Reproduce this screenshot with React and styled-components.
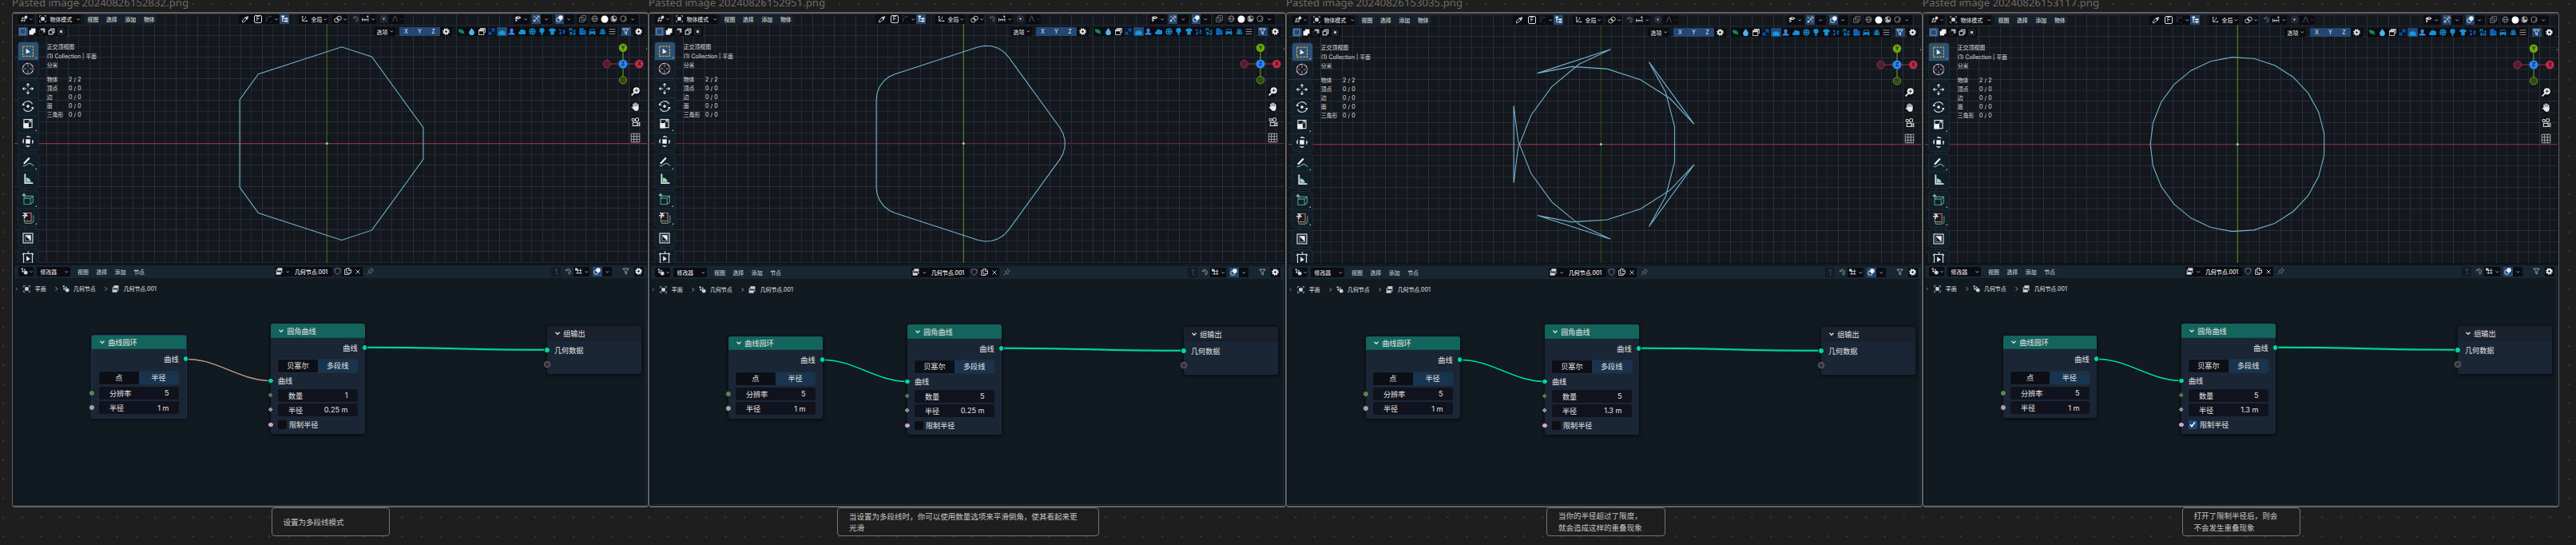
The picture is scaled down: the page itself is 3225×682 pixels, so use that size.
import React from "react";
import styled, { createGlobalStyle } from "styled-components";

const GlobalStyle = createGlobalStyle`
  * { box-sizing: border-box; }
  body { margin: 0; background: #1e1e1e; }
`;

/* ---------- icons ---------- */

const S = { fill: "none", stroke: "currentColor", strokeWidth: 1.5 };
const F = { fill: "currentColor" };

const icons = {
  chevron: <path d="M4 6l4 4 4-4" {...S} strokeWidth={2} />,
  right: <path d="M6 3l5 5-5 5" {...S} strokeWidth={1.8} />,
  left: <path d="M10 3L5 8l5 5" {...S} strokeWidth={1.8} />,
  view3d: (
    <g {...S}>
      <path d="M1 7h10M0 12h10M5 4L2 15M10 8l-3 7" />
      <circle cx="11.5" cy="4.5" r="3.4" {...F} stroke="none" />
    </g>
  ),
  object: (
    <g>
      <rect x="4" y="4" width="8" height="8" {...F} />
      <path d="M1 4.500V1h3.500M11.500 1H15v3.500M15 11.500V15h-3.500M4.500 15H1v-3.500" {...S} strokeWidth={1.2} />
    </g>
  ),
  dropper: (
    <g>
      <path d="M2 14l1-4 5-5 3 3-5 5z" {...S} />
      <path d="M7 4l5 5 1.500-1.500-1-1 2.500-3-2-2-3 2.500-1-1z" {...F} />
    </g>
  ),
  corner: (
    <g {...S}>
      <path d="M3 14v-3a8 8 0 0 1 8-8h3" />
      <path d="M1 1h6M1 1v6M15 15H9" opacity=".4" />
    </g>
  ),
  tree: (
    <g {...F}>
      <rect x="1" y="1" width="6" height="4" />
      <rect x="8" y="6" width="7" height="3.500" />
      <rect x="8" y="11.500" width="7" height="3.500" />
      <path d="M3 5v8.500h5M3 8h5" {...S} />
    </g>
  ),
  axes: <path d="M3 13V2M1 4l2-2 2 2M3 13h11M12 11l2 2-2 2M3 13l7-7M10 3v3.500" {...S} />,
  link: (
    <g {...S}>
      <ellipse cx="10.500" cy="6" rx="4.500" ry="4" />
      <ellipse cx="5.500" cy="10" rx="4.500" ry="4" />
      <circle cx="8" cy="8" r=".8" {...F} />
    </g>
  ),
  magnet: <path d="M2 6a6 6 0 1 1 8 8l-2-3a3 3 0 1 0-3.500-4zM10 14l2-1M2 6l3 1" {...S} strokeWidth={1.6} />,
  snap: (
    <g {...S}>
      <path d="M1 6v8M1 10h13M5 8v5M9 8v5M14 6v8" />
      <circle cx="13" cy="3" r="2" {...F} stroke="none" />
    </g>
  ),
  prop: (
    <g>
      <circle cx="8" cy="8" r="6.500" {...S} strokeWidth={1} opacity=".6" />
      <circle cx="8" cy="8" r="2.500" {...F} />
    </g>
  ),
  falloff: <path d="M1 14C6 13 5 2 8 2s2 11 7 12" {...S} />,
  eyeCursor: (
    <g>
      <path d="M1 6c3-5 10-5 14-1-3 5-10 5-14 1z" {...F} />
      <circle cx="9" cy="5" r="1.500" fill="#111" />
      <path d="M2 8l1 7 4-4z" {...F} />
    </g>
  ),
  gizmo: (
    <g {...S}>
      <path d="M2 3c5 1 9 5 11 11M3 13L13 3M9 2h5v5" />
      <path d="M2 14l1-4 3 3z" {...F} />
    </g>
  ),
  overlay: (
    <g>
      <circle cx="10.500" cy="5.500" r="5" {...F} />
      <circle cx="6" cy="10" r="4.800" {...S} />
    </g>
  ),
  xray: <path d="M5 1h10v10H5zM1 5h10v10H1z" {...S} strokeWidth={1.3} />,
  wire: (
    <g {...S} strokeWidth={1.100}>
      <circle cx="8" cy="8" r="6.500" />
      <ellipse cx="8" cy="8" rx="3" ry="6.500" />
      <path d="M1.500 8h13" />
    </g>
  ),
  solid: <circle cx="8" cy="8" r="7.200" {...F} />,
  material: (
    <g>
      <circle cx="8" cy="8" r="6.500" {...S} />
      <path d="M8 1.500v6.500H14a6.500 6.500 0 0 1-10 5V3a6.500 6.500 0 0 1 4-1.500z" {...F} />
    </g>
  ),
  rendered: (
    <g {...S}>
      <circle cx="8" cy="8" r="6.500" />
      <path d="M12 5a5 5 0 0 1-4 7" />
    </g>
  ),
  gear: (
    <g>
      <circle cx="8" cy="8" r="4" fill="none" stroke="currentColor" strokeWidth="3.400" />
      <circle cx="8" cy="8" r="6.300" fill="none" stroke="currentColor" strokeWidth="3" strokeDasharray="2.470 2.470" />
    </g>
  ),
  selNew: <rect x="1.500" y="1.500" width="13" height="13" {...S} strokeDasharray="2 1.500" />,
  selAdd: <path d="M5 1h10v10h-4v4H1V5h4z" {...F} />,
  selSub: (
    <g>
      <path d="M5 1h10v9h-4V5H5z" {...F} />
      <path d="M1.500 5.500h8v9h-8z" {...S} strokeDasharray="1.500 2" opacity=".6" />
    </g>
  ),
  selXor: <path d="M5.500 2H14v8.500h-3.500M10.500 5.500H2V14h8.500zM5.500 2v3.500" {...S} strokeWidth={2.2} />,
  selAnd: (
    <g>
      <rect x="5" y="5" width="6" height="6" {...F} />
      <rect x="1.500" y="1.500" width="13" height="13" {...S} strokeDasharray="2 2" opacity=".6" />
    </g>
  ),
  leaf: <path d="M1 3c7-1 13 2 13 6l1 5-4-2C5 12 2 9 1 3z" {...F} />,
  drop: <path d="M8 0c3 5 6 7 6 10.500a6 5.500 0 0 1-12 0C2 7 5 5 8 0z" {...F} />,
  windows: (
    <g>
      <path d="M4 4V1h11v9h-3" {...S} />
      <rect x="1" y="4" width="11" height="11" {...S} />
      <rect x="1" y="4" width="11" height="3.500" {...F} />
      <path d="M4 1h11v2H4z" {...F} />
    </g>
  ),
  checker: (
    <g>
      <rect x="1" y="1" width="14" height="14" fill="#04101f" stroke="currentColor" />
      <path d="M8 1h7v7H8zM1 8h7v7H1z" {...F} />
    </g>
  ),
  dome: <path d="M1 15v-4a7 5 0 0 1 14 0v4zM3 2v2M8 1v2M13 2v2" fill="currentColor" stroke="currentColor" />,
  person: <path d="M8 1a4 4 0 0 1 3 6.500l-1 2.500 5 2v3H1v-3l5-2-1-2.500A4 4 0 0 1 8 1z" {...F} />,
  cloud: <path d="M3 14a3 3 0 0 1 0-6 5 5 0 0 1 9-3 4.500 4.500 0 0 1 1 9z" {...F} />,
  reel: (
    <g>
      <circle cx="8" cy="8" r="6.200" fill="none" stroke="currentColor" strokeWidth="2.200" />
      <path d="M8 2v12M2 8h12M4 4l8 8M12 4l-8 8" {...S} strokeWidth={1.6} />
    </g>
  ),
  bulb: <path d="M8 0a5.500 5.500 0 0 1 5.500 6c0 3-3 4-3.500 6H6c-.5-2-3.500-3-3.500-6A5.500 5.500 0 0 1 8 0zM6 13h4v3H6z" {...F} />,
  shirt: <path d="M5 1h6l5 3-2 4-2-1v8H4V7L2 8 0 4z" {...F} />,
  nodesX: <path d="M2 3l4 4M10 9l4 4M2 13h3V9M12 3v4h3" {...S} strokeWidth={3} />,
  cycle: <path d="M2 7V2h5v4M14 3v4H9M2 10h4v4H2M10 10v4h4V9" {...S} strokeWidth={1.8} />,
  building: (
    <g>
      <path d="M1 15V1h9v14zM11 5h4v10h-4z" {...F} />
      <path d="M3 4h5M3 7h5M3 10h5M12 8h2M12 11h2" stroke="#03101e" />
    </g>
  ),
  car: (
    <g>
      <path d="M3 2h10l2 6v7h-3v-2H4v2H1V8z" {...F} />
      <path d="M4 4h8l1 3H3zM3 9.500h2M11 9.500h2" fill="#03101e" stroke="#03101e" />
    </g>
  ),
  road: (
    <g>
      <path d="M4 2h8l3 12H1z" {...F} />
      <path d="M6 3L4 14M10 3l2 11" stroke="#03101e" />
    </g>
  ),
  lines: <path d="M1 3h14M1 8h14M1 13h14" {...S} />,
  filter: <path d="M1.500 2h13l-5 6v6l-3-2V8z" {...S} strokeWidth={1.7} />,
  nodetree: (
    <g {...F}>
      <circle cx="11" cy="11" r="4.300" />
      <circle cx="4" cy="8" r="2" />
      <path d="M1 1h4v3H1zM7 3h3v3H7z" />
      <path d="M3 3l5 8" {...S} strokeWidth={1} />
    </g>
  ),
  group: (
    <g {...F}>
      <rect x="4" y="0.500" width="11" height="6" rx="1" />
      <rect x="1" y="9.500" width="11" height="6" rx="1" />
      <path d="M14 7v5M2 4v5" {...S} strokeWidth={1.8} />
    </g>
  ),
  shield: <path d="M2 3l6-2 6 2v5c0 3-3 5-6 7-3-2-6-4-6-7z" {...S} />,
  copy: <path d="M5 1h6l4 4v7H5zM10 1v5h5M5 4H1v11h10v-3" {...S} strokeWidth={1.7} />,
  close: <path d="M3 3l10 10M13 3L3 13" {...S} strokeWidth={1.8} />,
  pin: <path d="M10 1l5 5-2 .5-2.500 3.500-.5 3-6-6 3-.5L9.500 3zM6 10l-5 5" {...S} />,
  up: <path d="M8 13V2M4 6l4-4 4 4M8 14h5" {...S} />,
  gridSnap: (
    <g {...S}>
      <path d="M6 2v12M12 2v12M2 6h13M2 12h13" />
      <rect x="0" y="1" width="5" height="5" {...F} stroke="none" />
    </g>
  ),
};

const Glyph = ({ name, size = 9 }) => (
  <svg width={size} height={size} viewBox="0 0 16 16" style={{ display: "block", flex: "none" }}>
    {icons[name]}
  </svg>
);

/* left toolbar drawings, 24 x 24 */
const W = { fill: "none", stroke: "#d8d8d8", strokeWidth: 1.3 };
const G = { fill: "none", stroke: "#4f9a7c", strokeWidth: 1.2 };
const toolArt = {
  select: (
    <g>
      <rect x="5" y="5.500" width="14" height="13.500" fill="none" stroke="#d9a336" strokeWidth="1.300" strokeDasharray="3 1.300" />
      <path d="M9.500 8.500v7l5.500-2.500z" fill="#f2f2f2" />
    </g>
  ),
  cursor: (
    <g>
      <circle cx="12" cy="12" r="7.300" fill="none" stroke="#e6dede" strokeWidth="1.200" />
      <circle cx="12" cy="12" r="7.300" fill="none" stroke="#a84450" strokeWidth="1.200" strokeDasharray="3.500 3.500" />
      <path d="M12 6v4M12 14v4M6 12h4M14 12h4" stroke="#999" />
    </g>
  ),
  move: (
    <g fill="#e0e0e0">
      <path d="M12 4l2.500 3h-5zM12 20l2.500-3h-5zM4 12l3-2.500v5zM20 12l-3-2.500v5z" />
      <path d="M12 6v4M12 14v4M6 12h4M14 12h4" {...W} strokeWidth={1} />
    </g>
  ),
  rotate: (
    <g>
      <path d="M5.500 10a6.700 6.700 0 0 1 12.500-1M18.500 14a6.700 6.700 0 0 1-12.500 1" {...W} />
      <path d="M4 11h4l-3-3zM20 13h-4l3 3zM12 9.500l2.500 2.500-2.500 2.500L9.500 12z" fill="#e0e0e0" />
    </g>
  ),
  scale: (
    <g>
      <rect x="6.500" y="6" width="11" height="11" {...W} />
      <rect x="6" y="11" width="7" height="7" fill="#eee" />
      <path d="M12 11l4-4M13 7h3v3" {...W} strokeWidth={1} />
    </g>
  ),
  transform: (
    <g>
      <circle cx="12" cy="12" r="6.600" {...W} strokeDasharray="6 4.360" strokeDashoffset="3" />
      <rect x="9" y="9" width="6" height="6" fill="#eee" />
      <path d="M12 4l2 2h-4zM12 20l2-2h-4zM4 12l2-2v4zM20 12l-2-2v4z" fill="#ddd" />
    </g>
  ),
  annotate: (
    <g>
      <path d="M6.500 14L14 6" stroke="#eee" strokeWidth="2.400" />
      <path d="M5 16.500c4 2.500 6-3.500 10-3 2 .3 2 2.500 5 3" {...G} stroke="#63b78f" />
    </g>
  ),
  measure: (
    <g>
      <path d="M8 5v12.500h11" stroke="#e0e0e0" strokeWidth="2" fill="none" />
      <path d="M9.500 16v-6a6.500 6.500 0 0 1 6.500 6z" fill="#8fd9b3" />
    </g>
  ),
  cube: (
    <g>
      <path d="M6.500 10h9v8h-9zM6.500 10l3-3H19v8l-3.500 3M15.500 10L19 7" {...G} />
      <path d="M6.500 3v5M4 5.500h5" stroke="#8fe0b5" strokeWidth="1.300" />
    </g>
  ),
  cut: (
    <g>
      <path d="M7 18l1.500 2H16l3.500-2V9" {...G} />
      <path d="M8 6h8.500v11H7V12" {...W} stroke="#c46a62" />
      <path d="M4.500 9.500h7M6 5.500l5 5M7 13l3-7" {...W} strokeWidth={1.8} />
    </g>
  ),
  shear: (
    <g>
      <rect x="5.500" y="5.500" width="13" height="13" {...W} />
      <path d="M8 8h8v8z" fill="#eee" />
      <path d="M8.500 8v8H16" {...W} opacity=".5" />
    </g>
  ),
  cage: (
    <g>
      <path d="M6 6h12v13H6zM4.500 7L7 5M17 5l2.500 2" {...W} />
      <path d="M10 9v7l5-3z" fill="#eee" />
      <circle cx="12.500" cy="4" r="1.500" fill="#a77bd0" />
    </g>
  ),
};

/* ---------- page ---------- */

const Board = styled.div`
  width: 3225px;
  height: 682px;
  overflow: hidden;
  background: radial-gradient(circle at 4px 4.800px, #3c3c3c 0.7px, transparent 1.500px) 0 0 / 23.810px 23.810px #1e1e1e;
  font-family: Inter, "Noto Sans CJK SC", sans-serif;
  padding-left: 15px;
  display: flex;
`;

const Column = styled.section`
  width: ${(p) => p.$w}px;
  flex: none;
  display: flex;
  flex-direction: column;
`;

const FileTitle = styled.div`
  height: 15px;
  flex: none;
  line-height: 7.500px;
  font-family: "Noto Sans", sans-serif;
  font-size: 13.200px;
  color: #6a6a6a;
  white-space: nowrap;
`;

const Card = styled.div`
  height: 619.500px;
  flex: none;
  border: 2px solid #626262;
  border-width: 2px 1px;
  border-radius: 4px;
  background: #0e141a;
  padding: 0 1px 1px 2px;
  overflow: hidden;
`;

const Viewport = styled.div`
  position: relative;
  height: 313px;
  padding-top: ${(p) => 1 + p.$shift}px;
  background: #14171c;
  overflow: hidden;
  border-bottom: 1px solid #0d1218;
`;

const Scene = styled.svg`
  position: absolute;
  left: 0;
  top: ${(p) => p.$shift}px;
  width: 793px;
  height: 313px;
`;

const Bar = styled.div`
  position: relative;
  display: flex;
  align-items: center;
  height: ${(p) => p.$h || 11.5}px;
  margin-top: ${(p) => p.$mt || 0}px;
  padding-left: ${(p) => p.$pl ?? 5}px;
  font-size: 6.900px;
  font-weight: 500;
  color: #d2d2d2;
`;

const tones = { dark: "#0a0c11", blue: "#234873", menu: "#16212b", dim: "#131a26", none: "transparent" };

const Cell = styled.div`
  flex: none;
  width: ${(p) => p.$w}px;
  height: 11.500px;
  margin-left: ${(p) => p.$ml || 0}px;
  background: ${(p) => tones[p.$t || "dark"]};
  color: ${(p) => p.$c || "inherit"};
  display: flex;
  align-items: center;
  justify-content: center;
  border-radius: ${(p) => p.$r || 0}px;
  white-space: nowrap;
`;

const Button = styled(Cell)`
  justify-content: flex-start;
  padding: 0 2px 0 ${(p) => p.$pad ?? 3}px;
  gap: ${(p) => p.$gap || 0}px;
  border-radius: 2px;
  & > svg:last-child { margin-left: auto; }
`;

const MenuGroup = styled(Cell)`
  justify-content: flex-start;
  padding-left: ${(p) => p.$pad}px;
  gap: 9.700px;
  border-radius: 2px;
`;

const KeyBox = styled.span`
  width: 10.500px;
  height: 10px;
  border: 1px solid #ddd;
  border-radius: 2px;
  font-size: 7.500px;
  line-height: 8.500px;
  text-align: center;
`;

const IconCell = ({ name, size, ...rest }) => (
  <Cell {...rest}>
    <Glyph name={name} size={size} />
  </Cell>
);
const Chev = (p) => <IconCell name="chevron" size={6.5} {...p} />;

const Body = styled.div`
  position: relative;
  display: flex;
  align-items: flex-start;
  margin-top: 7.800px;
  padding-left: 5px;
`;

const Tools = styled.div`
  display: flex;
  flex-direction: column;
  gap: 3.900px;
  width: 24.500px;
`;

const ToolGroup = styled.div`
  flex: none;
  border-radius: 3px;
  background: #121e27;
  box-shadow: 0 0 0 0.800px #1c2f3e;
  overflow: hidden;
`;

const Tool = styled.div`
  position: relative;
  height: 21.800px;
  display: flex;
  align-items: center;
  justify-content: center;
  background: ${(p) => (p.$on ? "#2b5276" : "transparent")};
  & + & { box-shadow: inset 0 0.700px 0 #1c2f3e; }
  &::after {
    content: "";
    display: ${(p) => (p.$more ? "block" : "none")};
    position: absolute;
    right: 1.500px;
    bottom: 1.500px;
    border: 1.200px solid #b5b5b5;
    border-left-color: transparent;
    border-top-color: transparent;
  }
`;

const Info = styled.div`
  margin-left: 11.200px;
  font-size: 6.900px;
  line-height: 11.400px;
  color: #dedede;
  white-space: nowrap;
`;

const Stats = styled.dl`
  display: grid;
  grid-template-columns: 27.200px auto;
  margin: 6.300px 0 0;
  line-height: 11.050px;
  dt, dd { margin: 0; }
  dd { font-size: 7px; letter-spacing: 0.150px; }
`;

const NavColumn = styled.div`
  margin-left: auto;
  width: 56px;
  display: flex;
  flex-direction: column;
  align-items: flex-end;
  padding-right: 8px;
`;

const Gizmo = styled.svg`
  width: 56px;
  height: 56px;
  margin: -1px -6px 0 0;
  overflow: visible;
`;

const NavIcon = styled.svg`
  display: block;
  width: 13px;
  height: 13px;
  margin-bottom: 6.200px;
`;

/* ---------- viewport drawing ---------- */

const CX = 409.3;
const CY = 179.6;
const UNIT = 135;

const filletPentagon = (count, meters, limited) => {
  const half = UNIT * Math.sin(Math.PI / 5);
  const tan54 = Math.tan(0.3 * Math.PI);
  let r = meters * UNIT;
  if (limited) r = Math.min(r, half * tan54);
  const centre = UNIT - r / Math.sin(0.3 * Math.PI);
  const pts = [];
  for (let k = 0; k < 5; k++) {
    const a = (k * 2 * Math.PI) / 5;
    for (let i = 0; i <= count; i++) {
      const t = a - Math.PI / 5 + ((2 * Math.PI) / 5) * (i / count);
      pts.push([
        CX + centre * Math.cos(a) + r * Math.cos(t),
        CY - centre * Math.sin(a) - r * Math.sin(t),
      ]);
    }
  }
  return pts.map((p) => p.map((n) => n.toFixed(2)).join(",")).join(" ");
};

const range = (a, b) => Array.from({ length: b - a + 1 }, (_, i) => a + i);

const SceneDrawing = ({ count, radius, limited, green, red, shift }) => (
  <Scene $shift={shift} viewBox="18 17 793 313">
    {range(-29, 29).map((k) => {
      const x = Math.floor(409 + k * 13.5) + 0.5;
      return <path key={`x${k}`} d={`M${x} 10V330`} stroke={k % 2 ? "#1f2835" : "#262f40"} />;
    })}
    {range(-12, 11).map((k) => {
      const y = Math.floor(179.5 + k * 13.5) + 0.5;
      return <path key={`y${k}`} d={`M18 ${y}H811`} stroke={k % 2 ? "#1f2835" : "#262f40"} />;
    })}
    <path d="M18 179.600H811" stroke={red} strokeWidth="1.300" />
    <path d="M409.300 30V330" stroke={green} strokeWidth="1.300" />
    <polygon points={filletPentagon(count, radius, limited)} fill="none" stroke="#6fb4cd" strokeWidth="1.100" />
    <circle cx="409.300" cy="179.600" r="1.500" fill="#7fd3f0" />
  </Scene>
);

const toolGroups = [
  [["select", 1], ["cursor", 0]],
  [["move", 0], ["rotate", 0], ["scale", 1], ["transform", 0]],
  [["annotate", 1], ["measure", 0]],
  [["cube", 1], ["cut", 1]],
  [["shear", 0]],
  [["cage", 0]],
];

const addonIcons = [
  ["leaf", "#128a4a"], ["drop", "#4cb4f0"], ["windows", "#d8d8d8"], ["checker", "#0d4b96"],
  ["dome", "#159be0"], ["person", "#3d86e8"], ["cloud", "#1492da"], ["reel", "#1492da"],
  ["bulb", "#1492da"], ["shirt", "#1492da"], ["nodesX", "#155fc0"], ["cycle", "#1492da"],
  ["building", "#127fe6"], ["car", "#1492da"], ["road", "#1280c2"], ["lines", "#a8a8a8"],
];

const ViewportEditor = ({ shift, ...scene }) => (
  <Viewport $shift={shift}>
    <SceneDrawing shift={shift} {...scene} />
    <Bar>
      <Button $w={19} $gap={1}><Glyph name="view3d" /><Glyph name="chevron" size={6} /></Button>
      <Button $w={54} $ml={5} $pad={2} $gap={4.5}>
        <Glyph name="object" />物体模式<Glyph name="chevron" size={6.5} />
      </Button>
      <MenuGroup $w={92} $ml={4} $t="menu" $pad={4.5}>
        <span>视图</span><span>选择</span><span>添加</span><span>物体</span>
      </MenuGroup>
      <IconCell name="dropper" $w={16} $ml={102} size={10} />
      <Cell $w={16}><KeyBox>F</KeyBox></Cell>
      <IconCell name="corner" $w={11} $c="#5a5f66" />
      <Chev $w={8} />
      <IconCell name="tree" $w={12} $t="blue" $c="#f2f2f2" />
      <IconCell name="axes" $w={15} $ml={12} />
      <Cell $w={15}>全局</Cell>
      <Chev $w={7} />
      <IconCell name="link" $w={13} $ml={5} size={10} />
      <Chev $w={6} />
      <IconCell name="magnet" $w={11} $ml={5} $t="dim" $c="#66696f" />
      <IconCell name="snap" $w={13} />
      <Chev $w={7} />
      <IconCell name="prop" $w={11} $ml={4} $t="dim" $c="#9aa0aa" />
      <IconCell name="falloff" $w={14} $ml={1} $c="#6a6e74" />
      <Chev $w={5} $c="#44484e" />
      <IconCell name="eyeCursor" $w={11} $ml={137} />
      <Chev $w={9} />
      <IconCell name="gizmo" $w={11} $ml={3} $t="blue" />
      <Chev $w={14} />
      <IconCell name="overlay" $w={11} $ml={4} $t="blue" $c="#f0f0f0" />
      <Chev $w={13} />
      <IconCell name="xray" $w={12} $ml={4} $c="#8d9096" />
      <IconCell name="wire" $w={12} $ml={3.5} $c="#a5a5a5" />
      <IconCell name="solid" $w={12} size={10} $c="#fff" />
      <IconCell name="material" $w={12} $c="#b5b5b5" />
      <IconCell name="rendered" $w={12} $c="#9c9c9c" />
      <Chev $w={12} />
    </Bar>
    <Bar $mt={4.3} $pl={4.5}>
      <IconCell name="selNew" $w={12} $t="blue" $c="#cfd6dd" />
      <IconCell name="selAdd" $w={12} $c="#f0f0f0" />
      <IconCell name="selSub" $w={12} $c="#b8b8b8" />
      <IconCell name="selXor" $w={12} $c="#c4c4c4" />
      <IconCell name="selAnd" $w={12} $c="#b8b8b8" />
      <Button $w={27} $ml={385.5} $pad={3.5}>选项<Glyph name="chevron" size={6.5} /></Button>
      <Cell $w={17} $ml={5} $t="blue">X</Cell>
      <Cell $w={17} $t="blue">Y</Cell>
      <Cell $w={17} $t="blue">Z</Cell>
      <IconCell name="gear" $w={15} $c="#e6e6e6" />
      {addonIcons.map(([name, colour], i) => (
        <IconCell key={name} name={name} $w={12.6} $ml={i ? 0 : 5.7} $c={colour} $t={name === "dome" ? "blue" : "dark"} />
      ))}
      <IconCell name="filter" $w={12} $ml={4.8} $t="blue" $c="#dfe6ef" />
      <IconCell name="gear" $w={13} $ml={3.5} $c="#f0f0f0" />
    </Bar>
    <Body>
      <Tools>
        {toolGroups.map((group, g) => (
          <ToolGroup key={g}>
            {group.map(([name, more]) => (
              <Tool key={name} $on={name === "select"} $more={more}>
                <svg width="22" height="22" viewBox="0 0 24 24">{toolArt[name]}</svg>
              </Tool>
            ))}
          </ToolGroup>
        ))}
      </Tools>
      <Info>
        <div>正交顶视图</div>
        <div>(1) Collection | 平面</div>
        <div>分米</div>
        <Stats>
          <dt>物体</dt><dd>2 / 2</dd>
          <dt>顶点</dt><dd>0 / 0</dd>
          <dt>边</dt><dd>0 / 0</dd>
          <dt>面</dt><dd>0 / 0</dd>
          <dt>三角形</dt><dd>0 / 0</dd>
        </Stats>
      </Info>
      <NavColumn>
        <Gizmo viewBox="-28 -28 56 56">
          <path d="M-15 0H15" stroke="#b02a44" strokeWidth="1.200" />
          <path d="M0-15V15" stroke="#5f9a12" strokeWidth="1.200" />
          <circle cx="-20.300" r="4.700" fill="#4f1f2c" stroke="#a32b42" />
          <circle cy="20.300" r="4.700" fill="#33491a" stroke="#5f9a12" />
          <circle cx="20.300" r="5.300" fill="#c12c45" />
          <circle cy="-20.300" r="5.300" fill="#69a80c" />
          <circle r="5.600" fill="#2a86f5" />
          <g fontSize="6.500" fontWeight="600" textAnchor="middle" fill="#10151c">
            <text y="2.400">Z</text>
            <text x="20.300" y="2.400">X</text>
            <text y="-17.900">Y</text>
          </g>
          <path d="M31-20.500l-2 1.800 2 1.800" fill="none" stroke="#aaa" strokeWidth=".8" />
        </Gizmo>
        <NavIcon viewBox="0 0 16 16">
          <circle cx="8" cy="8" r="8" fill="#0c0e12" />
          <circle cx="9.500" cy="6.500" r="5" fill="#e8e8e8" />
          <path d="M6 10l-4 4" stroke="#e8e8e8" strokeWidth="2.200" />
          <path d="M9.500 4v5M7 6.500h5" stroke="#222" strokeWidth="1.100" />
        </NavIcon>
        <NavIcon viewBox="0 0 16 16">
          <circle cx="8" cy="8" r="8" fill="#0c0e12" />
          <path d="M5 9V4M7.300 8V2.500M9.700 8V2.800M12 9V4.500" stroke="#e8e8e8" strokeWidth="1.700" strokeLinecap="round" />
          <path d="M4 7.500h9V11c0 2-1.500 3.500-4 3.500-2 0-3-1-4-2.500L1.500 9l1.300-.8L5 10z" fill="#e8e8e8" />
        </NavIcon>
        <NavIcon viewBox="0 0 16 16">
          <circle cx="8" cy="8" r="8" fill="#0c0e12" />
          <g fill="none" stroke="#d0d0d0" strokeWidth="1.400">
            <circle cx="4.500" cy="5" r="2" />
            <circle cx="10.500" cy="4.500" r="2.600" />
            <path d="M4 9h7v5H4zM11 11l3.500-2v5L11 12.500" />
          </g>
        </NavIcon>
        <NavIcon viewBox="0 0 16 16">
          <path d="M1.500 1.500h13v13h-13zM5.800 1.500v13M10.200 1.500v13M1.500 5.800h13M1.500 10.200h13" fill="#14171c" stroke="#c4c4c4" />
        </NavIcon>
      </NavColumn>
    </Body>
  </Viewport>
);

/* ---------- node editor ---------- */

const NodeEditor = styled.div`
  height: 301.500px;
  padding-top: ${(p) => p.$shift}px;
  background: #121a21;
  border-bottom: 1px solid #1c2c3c;
  box-shadow: inset -2px 0 0 #16232e;
`;

const NodeBar = styled(Bar)`
  background: #172631;
  height: 16px;
  margin-top: 1.800px;
`;

const MenuText = styled.span`
  flex: none;
  width: 13.800px;
  margin-left: ${(p) => p.$ml ?? 9.6}px;
  color: #b9c0c5;
  white-space: nowrap;
`;

const Canvas = styled.div`
  position: relative;
  height: 282px;
`;

const Crumbs = styled.div`
  display: flex;
  align-items: center;
  height: 27px;
  font-size: 6.900px;
  font-weight: 500;
  color: #cfcfcf;
  white-space: nowrap;
`;

const Crumb = styled.span`
  margin: 0 ${(p) => p.$mr}px 0 ${(p) => p.$ml}px;
`;

const Links = styled.svg`
  position: absolute;
  left: 0;
  top: 0;
  width: 793px;
  height: 282px;
`;

const NodeBox = styled.div`
  position: absolute;
  left: ${(p) => p.$x}px;
  top: ${(p) => p.$y}px;
  width: ${(p) => p.$w || 117.5}px;
  height: ${(p) => p.$h}px;
  border-radius: 3px;
  background: #1a2536;
  box-shadow: 0 1px 4px 1px rgba(4, 8, 12, 0.75)${(p) => (p.$selected ? ", 0 0 0 1px #35579b" : "")};
  font-size: 9.100px;
  color: #e2e2e2;
  white-space: nowrap;
`;

const NodeHead = styled.div`
  height: 17.200px;
  margin-bottom: 3px;
  padding-left: 7.500px;
  display: flex;
  align-items: center;
  gap: 2.700px;
  border-radius: 3px 3px 0 0;
  background: ${(p) => (p.$plain ? "#1b212c" : "#13645c")};
  border-bottom: 1px solid ${(p) => (p.$plain ? "#151c28" : "#125750")};
`;

const NodeRow = styled.div`
  position: relative;
  height: 18.300px;
  margin-top: ${(p) => p.$mt || 0}px;
  padding: 0 9px;
  display: flex;
  align-items: center;
  justify-content: ${(p) => (p.$out ? "flex-end" : "flex-start")};
`;

const Segments = styled.div`
  flex: 1;
  display: grid;
  grid-template-columns: 1fr 1fr;
  height: 16px;
  line-height: 15.500px;
  text-align: center;
  border-radius: 2.500px;
  overflow: hidden;
  box-shadow: 0 0 0 0.500px #2b3238;
`;

const Segment = styled.span`
  background: ${(p) => (p.$on ? "#18344e" : "#0c0f16")};
`;

const Field = styled.div`
  flex: 1;
  height: 16.300px;
  padding: 0 12px 0 13px;
  display: flex;
  align-items: center;
  justify-content: space-between;
  border-radius: 2.500px;
  background: #10131d;
  box-shadow: 0 0 0 0.500px #1f2835;
`;

const Check = styled.span`
  width: 10.500px;
  height: 11px;
  margin-right: 3.500px;
  border-radius: 2px;
  background: ${(p) => (p.$on ? "#204a7d" : "#0e0e10")};
  display: flex;
  align-items: center;
  justify-content: center;
`;

const Socket = styled.i`
  position: absolute;
  top: 50%;
  ${(p) => (p.$right ? "right: -3.700px" : "left: -3.700px")};
  width: 7.400px;
  height: 7.400px;
  margin-top: -3.700px;
  border: 0.600px solid #0b1015;
  border-radius: 50%;
  background: ${(p) => p.$c};
  ${(p) => p.$hollow && "border: 1px solid #777; background: #333;"}
`;

const DiamondSocket = styled(Socket)`
  border-radius: 1px;
  transform: rotate(45deg) scale(0.8);
  &::after {
    content: "";
    position: absolute;
    inset: 2.300px;
    border-radius: 50%;
    background: #14201b;
  }
`;

const GEO = "#00d6a3";

const Head = ({ children, plain }) => (
  <NodeHead $plain={plain}><Glyph name="chevron" size={10} />{children}</NodeHead>
);

const NodeGraph = ({ amount, length, limited, selected, startX }) => {
  const first = selected ? "#ad8f84" : GEO;
  return (
    <>
      <Links viewBox="18 348 793 282">
        <path d="M233 449.300C273 449.300 299 476.300 339 476.300" fill="none" stroke="#0a0f13" strokeWidth="3.200" />
        <path d="M233 449.300C273 449.300 299 476.300 339 476.300" fill="none" stroke={first} strokeWidth="1.700" />
        <path d="M456 434.700C560 434.700 580 437.700 685 437.700" fill="none" stroke="#0a3a33" strokeWidth="3.200" />
        <path d="M456 434.700C560 434.700 580 437.700 685 437.700" fill="none" stroke={GEO} strokeWidth="1.900" />
      </Links>
      <NodeBox $x={startX - 18} $y={71.8} $w={232.5 - startX} $h={103.5} $selected={selected}>
        <Head>曲线圆环</Head>
        <NodeRow $out>曲线<Socket $right $c={GEO} /></NodeRow>
        <NodeRow $mt={5.8}><Segments><Segment>点</Segment><Segment $on>半径</Segment></Segments></NodeRow>
        <NodeRow $mt={0.5}><Socket $c="#548a55" /><Field><span>分辨率</span><span>5</span></Field></NodeRow>
        <NodeRow><Socket $c="#a1a1a1" /><Field><span>半径</span><span>1 m</span></Field></NodeRow>
      </NodeBox>
      <NodeBox $x={321} $y={57.7} $h={138}>
        <Head>圆角曲线</Head>
        <NodeRow $out>曲线<Socket $right $c={GEO} /></NodeRow>
        <NodeRow $mt={4.6}><Segments><Segment>贝塞尔</Segment><Segment $on>多段线</Segment></Segments></NodeRow>
        <NodeRow $mt={0.4}><Socket $c={GEO} />曲线</NodeRow>
        <NodeRow><DiamondSocket $c="#548a55" /><Field><span>数量</span><span>{amount}</span></Field></NodeRow>
        <NodeRow><DiamondSocket $c="#a1a1a1" /><Field><span>半径</span><span>{length}</span></Field></NodeRow>
        <NodeRow>
          <Socket $c="#cca6d6" />
          <Check $on={limited}>
            {limited && (
              <svg width="8" height="8" viewBox="0 0 8 8"><path d="M1 4.200l2 2.300L7 1.200" fill="none" stroke="#fff" strokeWidth="1.500" /></svg>
            )}
          </Check>
          限制半径
        </NodeRow>
      </NodeBox>
      <NodeBox $x={667} $y={60.7} $h={60}>
        <Head plain>组输出</Head>
        <NodeRow><Socket $c={GEO} />几何数据</NodeRow>
        <NodeRow><Socket $hollow /></NodeRow>
      </NodeBox>
    </>
  );
};

const NodePane = ({ shift, ...graph }) => (
  <NodeEditor $shift={shift}>
    <NodeBar>
      <Button $w={19} $gap={1}><Glyph name="nodetree" /><Glyph name="chevron" size={6} /></Button>
      <Button $w={42} $ml={4} $pad={4.5}>修改器<Glyph name="chevron" size={6.5} /></Button>
      <MenuText $ml={9}>视图</MenuText>
      <MenuText>选择</MenuText>
      <MenuText>添加</MenuText>
      <MenuText>节点</MenuText>
      <IconCell name="group" $w={12} $ml={163} />
      <Chev $w={8} />
      <Button $w={52} $pad={5} $c="#f0f0f0">几何节点.001</Button>
      <IconCell name="shield" $w={13} $t="dim" $c="#8b9099" />
      <IconCell name="copy" $w={13} />
      <IconCell name="close" $w={12} size={8} />
      <IconCell name="pin" $w={16} $ml={2} $t="none" $c="#7e8489" />
      <IconCell name="up" $w={12} $ml={218.500} $t="dim" $c="#4b5056" />
      <IconCell name="magnet" $w={13} $ml={3} $t="none" $c="#888d93" />
      <IconCell name="gridSnap" $w={13} />
      <Chev $w={6.5} />
      <IconCell name="overlay" $w={12} $ml={4} $t="blue" $c="#f0f0f0" />
      <Chev $w={12} />
      <IconCell name="filter" $w={12} $ml={11.5} $t="none" $c="#a3a8ae" />
      <IconCell name="gear" $w={12} $ml={4.5} $c="#f0f0f0" />
    </NodeBar>
    <Canvas>
      <Crumbs>
        <Glyph name="right" size={5} />
        <Crumb $ml={5.8} $mr={2}><Glyph name="object" size={9} /></Crumb>
        <Crumb $ml={4} $mr={9}>平面</Crumb>
        <Glyph name="right" size={7} />
        <Crumb $ml={4.5} $mr={5}><Glyph name="nodetree" /></Crumb>
        <Crumb $ml={0} $mr={9}>几何节点</Crumb>
        <Glyph name="right" size={7} />
        <Crumb $ml={4} $mr={6}><Glyph name="group" /></Crumb>
        <Crumb $ml={0} $mr={0}>几何节点.001</Crumb>
      </Crumbs>
      <NodeGraph {...graph} />
    </Canvas>
  </NodeEditor>
);

const Caption = styled.p`
  width: ${(p) => p.$w}px;
  height: 36px;
  flex: none;
  margin: 0 0 0 ${(p) => p.$ml}px;
  padding: 1.500px 0 0 14px;
  display: flex;
  flex-direction: column;
  justify-content: center;
  border: 1.300px solid #757575;
  border-radius: 4px;
  background: #1e1e1e;
  font-family: "Noto Sans CJK SC", sans-serif;
  font-size: 9.530px;
  line-height: ${(p) => p.$lh}px;
  color: #c4c4c4;
  white-space: nowrap;
`;

const shots = [
  {
    file: "Pasted image 20240826152832.png", w: 797, topShift: 0, nodeShift: 0,
    scene: { count: 1, radius: 0.25, green: "#3b5c1d", red: "#8a2f4a" },
    graph: { amount: "1", length: "0.25 m", selected: true, startX: 115 },
    caption: { ml: 324.5, w: 148.5, lh: 14, lines: ["设置为多段线模式"] },
  },
  {
    file: "Pasted image 20240826152951.png", w: 798, topShift: 0, nodeShift: 1,
    scene: { count: 5, radius: 0.25, green: "#4f7a29", red: "#64273c" },
    graph: { amount: "5", length: "0.25 m", startX: 115 },
    caption: {
      ml: 236, w: 328, lh: 14,
      lines: ["当设置为多段线时，你可以使用数量选项来平滑倒角，使其看起来更", "光滑"],
    },
  },
  {
    file: "Pasted image 20240826153035.png", w: 797, topShift: 1, nodeShift: 1,
    scene: { count: 5, radius: 1.3, green: "#2c451c", red: "#8a2f4a" },
    graph: { amount: "5", length: "1.3 m", startX: 115 },
    caption: { ml: 326, w: 148.5, lh: 15, lines: ["当你的半径超过了限度，", "就会造成这样的重叠现象"] },
  },
  {
    file: "Pasted image 20240826153117.png", w: 797, topShift: 1, nodeShift: 0,
    scene: { count: 5, radius: 1.3, limited: true, green: "#4f7d20", red: "#7d2c45" },
    graph: { amount: "5", length: "1.3 m", limited: true, startX: 116 },
    caption: { ml: 324.5, w: 148.5, lh: 15, lines: ["打开了限制半径后，则会", "不会发生重叠现象"] },
  },
];

export default function App() {
  return (
    <>
      <GlobalStyle />
      <Board>
        {shots.map((s) => (
          <Column key={s.file} $w={s.w}>
            <FileTitle>{s.file}</FileTitle>
            <Card>
              <ViewportEditor shift={s.topShift} {...s.scene} />
              <NodePane shift={s.nodeShift} {...s.graph} />
            </Card>
            <Caption $w={s.caption.w} $ml={s.caption.ml} $lh={s.caption.lh}>
              {s.caption.lines.map((line) => <span key={line}>{line}</span>)}
            </Caption>
          </Column>
        ))}
      </Board>
    </>
  );
}
